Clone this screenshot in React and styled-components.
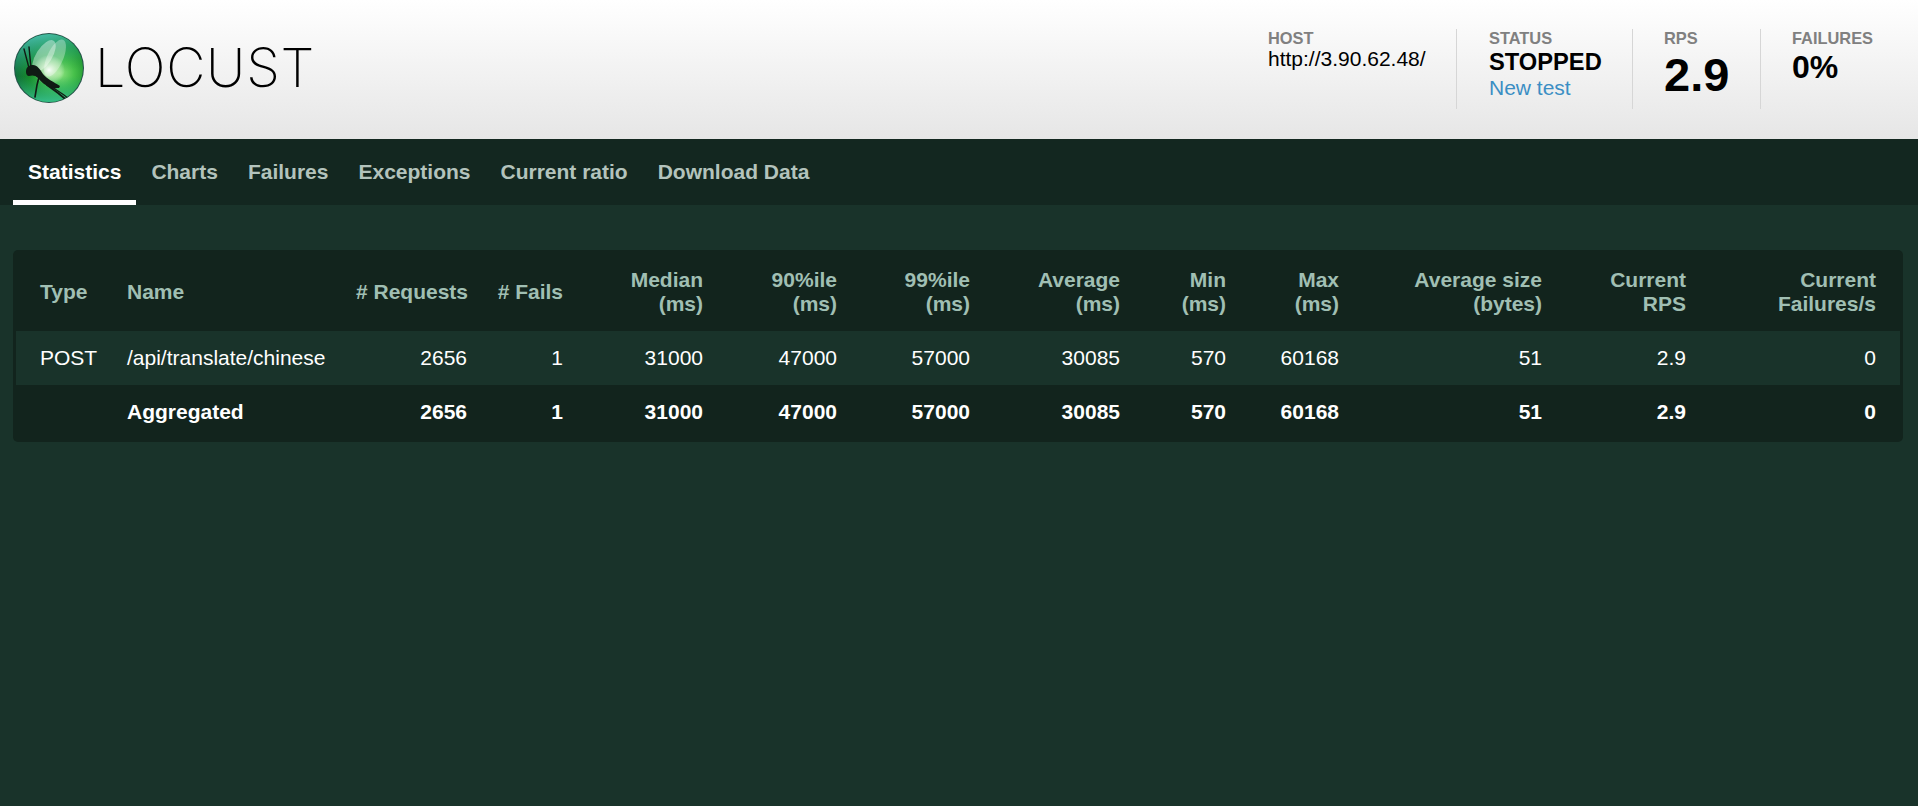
import React from "react";
import styled, { createGlobalStyle } from "styled-components";

const Global = createGlobalStyle`
  html, body { margin: 0; padding: 0; background: #19332a; }
  body { font-family: "Liberation Sans", Arial, sans-serif; font-size: 21px; }
`;

const Page = styled.div`
  min-height: 100vh;
  background: #19332a;
  display: flex;
  flex-direction: column;
`;

const Header = styled.header`
  height: 139px;
  box-sizing: border-box;
  display: flex;
  align-items: center;
  justify-content: space-between;
  padding-left: 14px;
  background: linear-gradient(to bottom, #ffffff 0%, #e6e6e6 100%);
`;

const Logo = styled.div`
  display: flex;
  align-items: center;
  gap: 11px;
  margin-top: -4px;
`;

const LogoWord = styled.span`
  font-family: Inter, "Liberation Sans", sans-serif;
  font-weight: 200;
  font-size: 54px;
  line-height: 1;
  color: #000;
  letter-spacing: 0.8px;
`;

const Stats = styled.div`
  display: flex;
  align-items: stretch;
  height: 80px;
  margin-top: -1px;
`;

const Stat = styled.div`
  box-sizing: border-box;
  width: ${(p) => p.$w}px;
  padding-left: ${(p) => p.$pad}px;
  border-left: ${(p) => (p.$first ? "none" : "1px solid #d6d6d6")};
`;

const Label = styled.div`
  font-size: 16.4px;
  line-height: 18px;
  font-weight: 700;
  color: #808080;
  text-transform: uppercase;
`;

const HostValue = styled.div`
  font-size: 21px;
  line-height: 24px;
  color: #000;
`;

const StatusValue = styled.div`
  margin-top: 1px;
  font-size: 23.7px;
  line-height: 28px;
  font-weight: 700;
  color: #000;
`;

const NewTest = styled.a`
  display: block;
  font-size: 21px;
  line-height: 23px;
  color: #3b8ec4;
  text-decoration: none;
`;

const BigValue = styled.div`
  margin-top: 1px;
  font-size: 47px;
  line-height: 54px;
  font-weight: 700;
  color: #000;
`;

const MidValue = styled.div`
  margin-top: 2px;
  font-size: 32px;
  line-height: 36px;
  font-weight: 700;
  color: #000;
`;

const Tabs = styled.nav`
  height: 66px;
  box-sizing: border-box;
  padding-left: 13px;
  display: flex;
  background: #132720;
`;

const Tab = styled.a`
  box-sizing: border-box;
  height: 66px;
  padding: 21px 15px 0;
  font-size: 21px;
  line-height: 24px;
  font-weight: 700;
  color: ${(p) => (p.$active ? "#ffffff" : "#b3c3bc")};
  border-bottom: 5px solid ${(p) => (p.$active ? "#ffffff" : "transparent")};
`;

const Main = styled.main`
  padding: 45px 15px 0 13px;
`;

const TableCard = styled.div`
  background: #12241d;
  border-radius: 5px;
  padding: 3px;
`;

const Table = styled.table`
  width: 100%;
  table-layout: fixed;
  border-collapse: collapse;
  font-size: 21px;
  line-height: 24px;
  color: #fff;
`;

const Col = styled.col`
  width: ${(p) => p.$w}px;
`;

const Th = styled.th`
  height: 78px;
  padding: 0 15px;
  box-sizing: border-box;
  font-weight: 700;
  white-space: nowrap;
  color: #a0bfb3;
  text-align: ${(p) => (p.$left ? "left" : "right")};
  &:first-child { padding-left: 24px; }
  &:last-child { padding-right: 24px; }
`;

const Row = styled.tr`
  background: ${(p) => (p.$total ? "transparent" : "#19332a")};
  font-weight: ${(p) => (p.$total ? 700 : 400)};
`;

const Td = styled.td`
  height: 54px;
  padding: 0 15px;
  box-sizing: border-box;
  white-space: nowrap;
  text-align: ${(p) => (p.$left ? "left" : "right")};
  &:first-child { padding-left: 24px; }
  &:last-child { padding-right: 24px; }
`;

const widths = [96, 229, 141, 96, 140, 134, 133, 150, 106, 113, 203, 144, 199];

const headers = [
  ["Type"], ["Name"], ["# Requests"], ["# Fails"],
  ["Median", "(ms)"], ["90%ile", "(ms)"], ["99%ile", "(ms)"], ["Average", "(ms)"],
  ["Min", "(ms)"], ["Max", "(ms)"], ["Average size", "(bytes)"], ["Current", "RPS"], ["Current", "Failures/s"],
];

const stats = ["2656", "1", "31000", "47000", "57000", "30085", "570", "60168", "51", "2.9", "0"];

const tabs = ["Statistics", "Charts", "Failures", "Exceptions", "Current ratio", "Download Data"];

function LogoMark() {
  return (
    <svg width="70" height="70" viewBox="0 0 70 70" aria-hidden="true">
      <defs>
        <radialGradient id="ball" cx="66%" cy="58%" r="66%">
          <stop offset="0%" stopColor="#8be27f" />
          <stop offset="32%" stopColor="#46c04a" />
          <stop offset="68%" stopColor="#168a2a" />
          <stop offset="100%" stopColor="#0f6a3c" />
        </radialGradient>
        <linearGradient id="sheen" x1="0.3" y1="0" x2="0.5" y2="1">
          <stop offset="0%" stopColor="#4dc4b2" stopOpacity="0.95" />
          <stop offset="40%" stopColor="#2fae86" stopOpacity="0.3" />
          <stop offset="62%" stopColor="#1d8a2e" stopOpacity="0" />
        </linearGradient>
        <linearGradient id="under" x1="0.5" y1="0.62" x2="0.5" y2="1">
          <stop offset="0%" stopColor="#2bb070" stopOpacity="0" />
          <stop offset="100%" stopColor="#38c08e" stopOpacity="0.95" />
        </linearGradient>
        <radialGradient id="glow" cx="50%" cy="50%" r="50%">
          <stop offset="0%" stopColor="#ffffff" stopOpacity="0.95" />
          <stop offset="55%" stopColor="#d8f5d0" stopOpacity="0.55" />
          <stop offset="100%" stopColor="#ffffff" stopOpacity="0" />
        </radialGradient>
        <clipPath id="ballClip"><circle cx="35" cy="35" r="34.5" /></clipPath>
      </defs>
      <circle cx="35" cy="35" r="35" fill="#24524a" />
      <circle cx="35" cy="35" r="34" fill="url(#ball)" />
      <circle cx="35" cy="35" r="34" fill="url(#sheen)" />
      <circle cx="35" cy="35" r="34" fill="url(#under)" />
      <ellipse cx="35" cy="37" rx="16" ry="15" fill="url(#glow)" />
      <ellipse cx="30" cy="23" rx="8" ry="18" transform="rotate(32 30 23)" fill="#ffffff" opacity="0.4" />
      <ellipse cx="41" cy="25" rx="8" ry="20" transform="rotate(24 41 25)" fill="#ffffff" opacity="0.32" />
      <g clipPath="url(#ballClip)" fill="none" stroke="#101a14" strokeLinecap="round">
        <path d="M15 35 L10 16" strokeWidth="1.4" />
        <path d="M17 35 L15 14" strokeWidth="1.4" />
        <path d="M25 44 L23 52 L21 64" strokeWidth="1.6" />
        <path d="M33 52 L44 60 L56 70" strokeWidth="1.8" />
        <path d="M38 54 L50 62 L60 70" strokeWidth="1.2" />
      </g>
      <path
        d="M12 39 C12 34 15 32 19 32 C23 32 26 36 29 41 C33 46 40 49 46 53 L45 55 C41 55 39 56 37 55 C31 52 27 49 24 45 C21 42 18 42 15 43 C13 43 12 41 12 39 Z"
        fill="#101a14"
      />
    </svg>
  );
}

export default function App() {
  return (
    <>
      <Global />
      <Page>
        <Header>
          <Logo>
            <LogoMark />
            <LogoWord>LOCUST</LogoWord>
          </Logo>
          <Stats>
            <Stat $first $w={188} $pad={0}>
              <Label>Host</Label>
              <HostValue>http://3.90.62.48/</HostValue>
            </Stat>
            <Stat $w={176} $pad={32}>
              <Label>Status</Label>
              <StatusValue>STOPPED</StatusValue>
              <NewTest>New test</NewTest>
            </Stat>
            <Stat $w={128} $pad={31}>
              <Label>RPS</Label>
              <BigValue>2.9</BigValue>
            </Stat>
            <Stat $w={158} $pad={31}>
              <Label>Failures</Label>
              <MidValue>0%</MidValue>
            </Stat>
          </Stats>
        </Header>
        <Tabs>
          {tabs.map((t, i) => (
            <Tab key={t} $active={i === 0}>{t}</Tab>
          ))}
        </Tabs>
        <Main>
          <TableCard>
            <Table>
              <colgroup>
                {widths.map((w, i) => (
                  <Col key={i} $w={w} />
                ))}
              </colgroup>
              <thead>
                <tr>
                  {headers.map((h, i) => (
                    <Th key={i} $left={i < 2}>
                      {h[0]}
                      {h[1] && <br />}
                      {h[1]}
                    </Th>
                  ))}
                </tr>
              </thead>
              <tbody>
                <Row>
                  <Td $left>POST</Td>
                  <Td $left>/api/translate/chinese</Td>
                  {stats.map((s, i) => (
                    <Td key={i}>{s}</Td>
                  ))}
                </Row>
                <Row $total>
                  <Td $left></Td>
                  <Td $left>Aggregated</Td>
                  {stats.map((s, i) => (
                    <Td key={i}>{s}</Td>
                  ))}
                </Row>
              </tbody>
            </Table>
          </TableCard>
        </Main>
      </Page>
    </>
  );
}
